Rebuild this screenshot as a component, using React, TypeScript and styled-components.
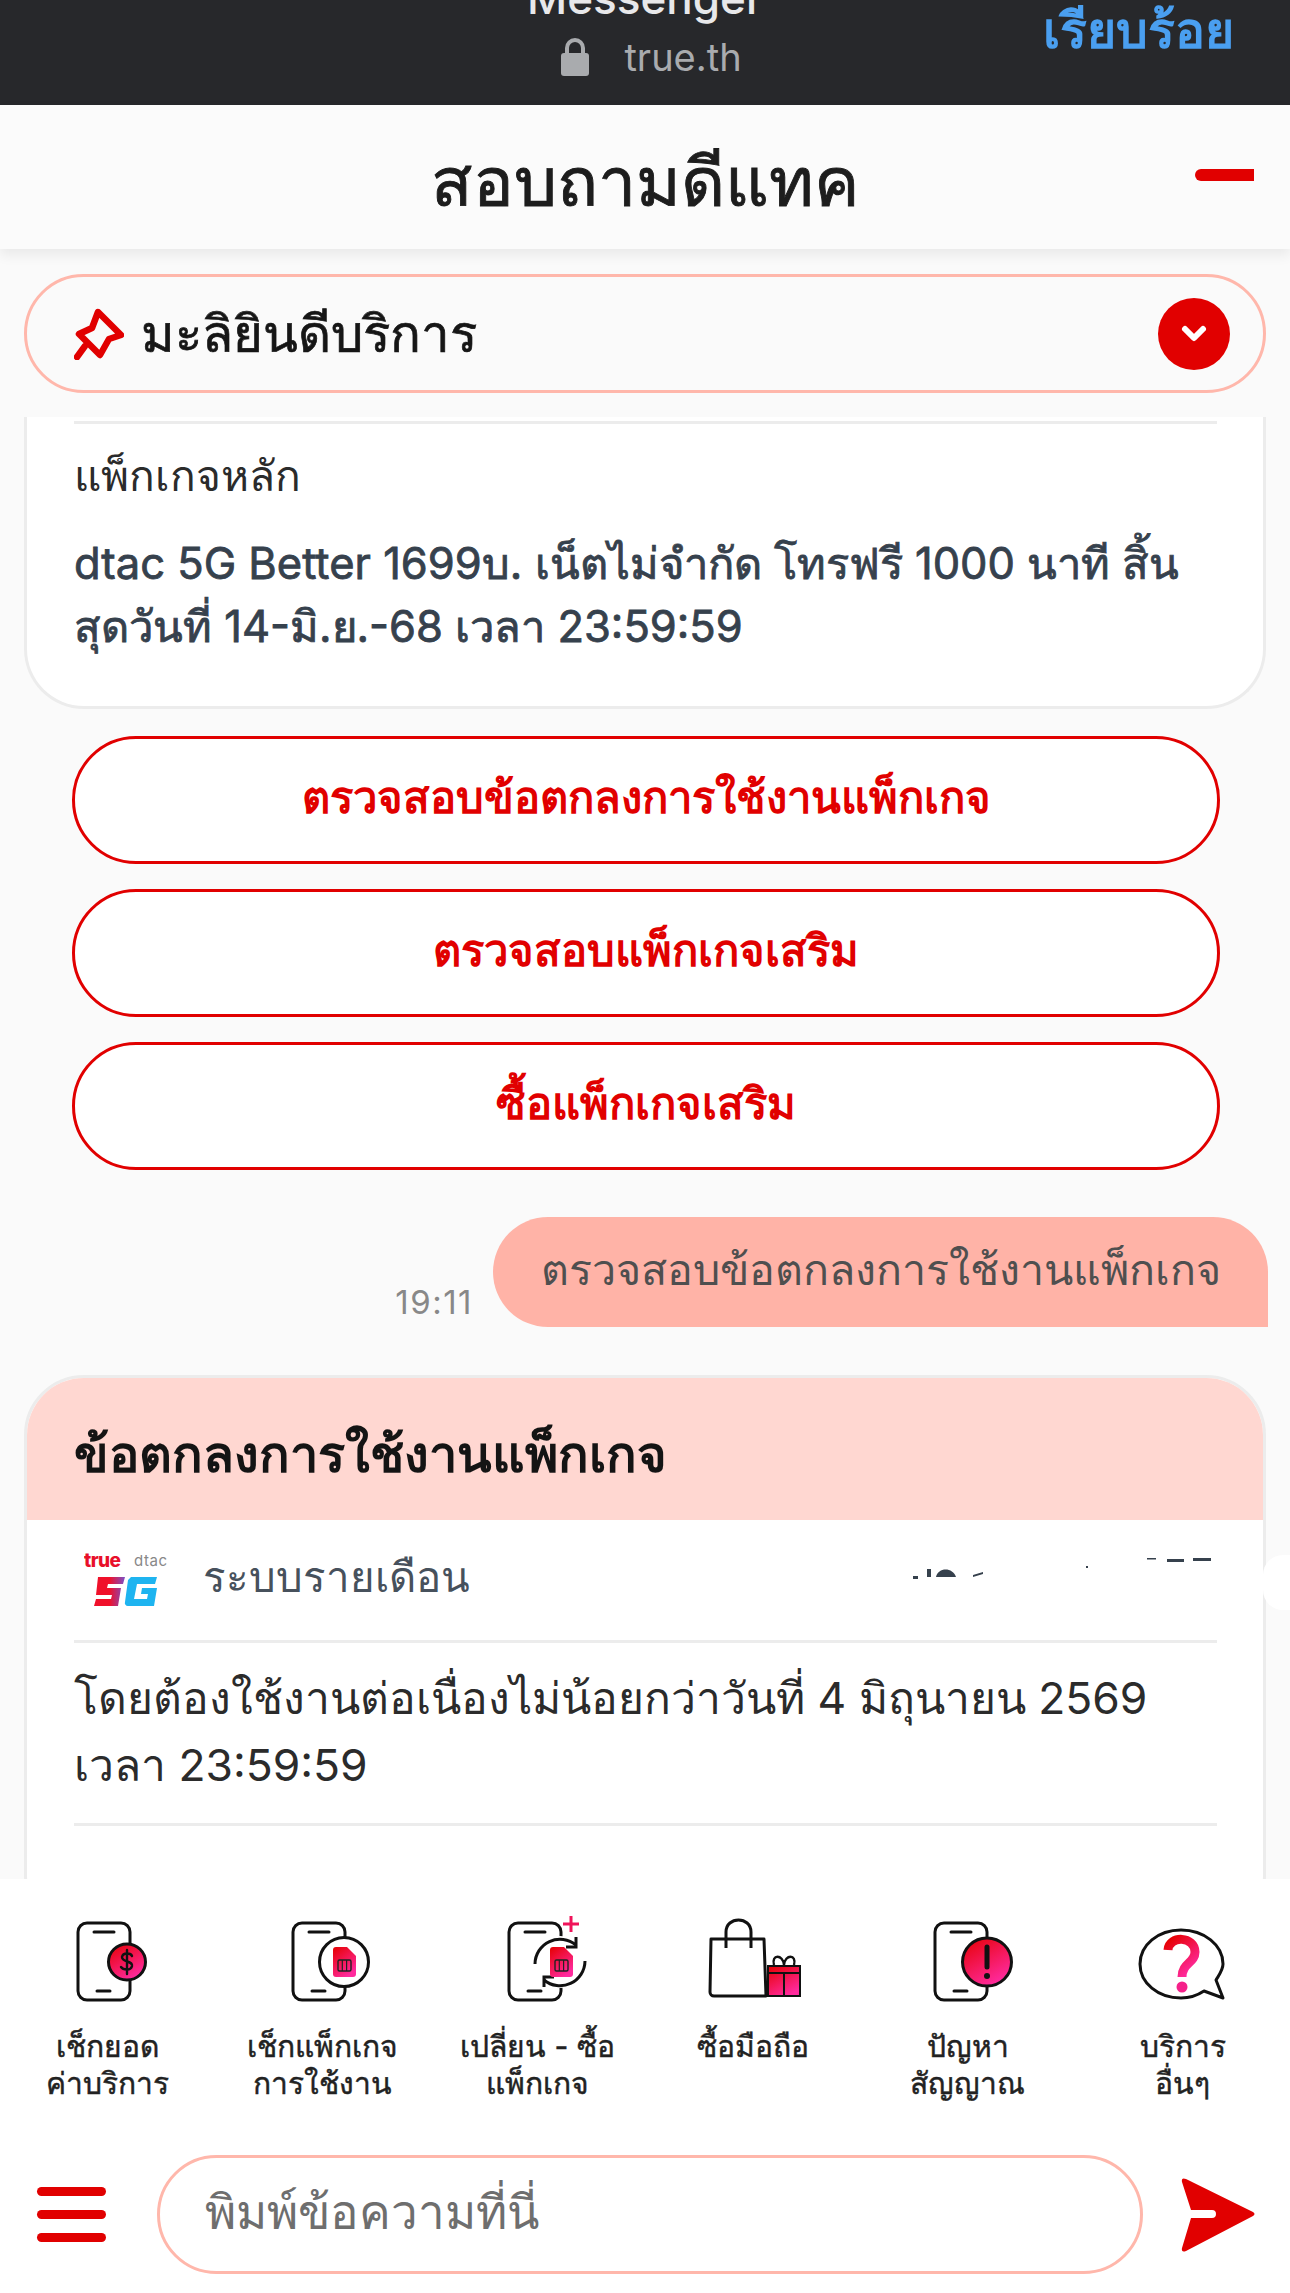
import React from 'react';
import styled, { createGlobalStyle } from 'styled-components';

const RED = '#e10000';

const GlobalStyle = createGlobalStyle`
  html, body {
    margin: 0;
    padding: 0;
    background: #fafafa;
  }
  * {
    box-sizing: border-box;
  }
`;

const Page = styled.div`
  width: 1290px;
  height: 2293px;
  overflow: hidden;
  position: relative;
  display: flex;
  flex-direction: column;
  background: #fafafa;
  font-family: Inter, 'Noto Sans', 'Liberation Sans', sans-serif;
`;

const BrowserBar = styled.div`
  height: 105px;
  flex: none;
  background: #27282b;
  position: relative;
  overflow: hidden;
  display: flex;
  flex-direction: column;
  align-items: center;
`;

const BrowserTitle = styled.div`
  margin-top: -27px;
  height: 50px;
  line-height: 50px;
  font-size: 44px;
  font-weight: 500;
  color: #e8e8ea;
`;

const BrowserUrl = styled.div`
  display: flex;
  align-items: center;
  gap: 34px;
  margin: 13px 0 0 12px;
  font-size: 38px;
  line-height: 42px;
  color: #a9abae;
`;

const DoneLink = styled.div`
  position: absolute;
  right: 56px;
  top: -2px;
  font-size: 50px;
  font-weight: 700;
  line-height: 64px;
  color: #4a9ff0;
`;

const TitleBar = styled.header`
  height: 144px;
  flex: none;
  background: #fbfbfb;
  box-shadow: 0 6px 12px rgba(0, 0, 0, 0.07);
  display: flex;
  align-items: center;
  justify-content: center;
  padding-top: 9px;
  position: relative;
  z-index: 2;
`;

const TitleText = styled.h1`
  margin: 0;
  font-size: 68px;
  font-weight: 400;
  -webkit-text-stroke: 0.9px #1d1d1d;
  color: #1d1d1d;
`;

const MinusMark = styled.span`
  position: absolute;
  left: 1195px;
  top: 64px;
  width: 59px;
  height: 12px;
  background: ${RED};
  border-radius: 6px 0 0 6px;
`;

const PinArea = styled.div`
  flex: none;
  padding: 25px 24px 24px;
`;

const PinPill = styled.div`
  height: 119px;
  border: 3px solid #ffb7ab;
  border-radius: 60px;
  display: flex;
  align-items: center;
  padding: 0 33px 0 47px;
  gap: 17px;
  font-size: 51px;
  -webkit-text-stroke: 0.7px #161616;
  color: #161616;
`;

const PinLabel = styled.span`
  flex: 1;
`;

const ChevronDot = styled.span`
  width: 72px;
  height: 72px;
  border-radius: 50%;
  background: ${RED};
  display: flex;
  align-items: center;
  justify-content: center;
`;

const Chat = styled.main`
  flex: 1;
  min-height: 0;
  overflow: hidden;
  padding: 0 24px;
  display: flex;
  flex-direction: column;
`;

const PackageCard = styled.section`
  height: 292px;
  flex: none;
  background: #fff;
  border: 3px solid #ececec;
  border-top: 0;
  border-radius: 0 0 60px 60px;
  padding: 4px 46px 0 47px;
`;

const Divider = styled.div`
  height: 3px;
  background: #ececec;
`;

const PlainLine = styled.p`
  margin: 21px 0 0;
  font-size: 42.5px;
  line-height: 62px;
  color: #2b2b2b;
`;

const PackageText = styled.p`
  margin: 25px 0 0;
  font-size: 43.5px;
  -webkit-text-stroke: 0.8px #36414d;
  line-height: 63px;
  white-space: nowrap;
  color: #36414d;
`;

const ActionList = styled.div`
  flex: none;
  margin: 27px 46px 0 48px;
  display: flex;
  flex-direction: column;
  gap: 25px;
`;

const ActionButton = styled.div`
  height: 128px;
  border: 3px solid ${RED};
  border-radius: 64px;
  background: #fff;
  display: flex;
  align-items: center;
  justify-content: center;
  padding-bottom: 6px;
  font-size: 43.6px;
  font-weight: 700;
  color: ${RED};
`;

const OutgoingRow = styled.div`
  flex: none;
  margin-top: 47px;
  margin-right: -2px;
  display: flex;
  justify-content: flex-end;
  align-items: flex-end;
  gap: 20px;
`;

const TimeStamp = styled.span`
  font-size: 33px;
  letter-spacing: 1.5px;
  line-height: 36px;
  margin-bottom: 7px;
  color: #888;
`;

const Bubble = styled.div`
  width: 775px;
  height: 110px;
  background: #ffb3a7;
  border-radius: 55px 55px 0 55px;
  display: flex;
  align-items: center;
  justify-content: center;
  padding-bottom: 4px;
  font-size: 43px;
  color: #4f4f4f;
`;

const TermsCard = styled.section`
  flex: none;
  margin-top: 48px;
  height: 560px;
  background: #fff;
  border: 3px solid #ececec;
  border-radius: 60px;
  overflow: hidden;
`;

const TermsHeader = styled.div`
  height: 142px;
  background: #ffd7d1;
  padding: 10px 47px 0;
  display: flex;
  align-items: center;
  font-size: 50.6px;
  font-weight: 600;
  color: #141414;
`;

const TermsBody = styled.div`
  padding: 0 46px 0 47px;
`;

const PlanRow = styled.div`
  height: 120px;
  display: flex;
  align-items: center;
  gap: 34px;
  padding: 0 2px 0 10px;
  font-size: 42px;
  color: #47515c;
`;

const PlanName = styled.span`
  flex: 1;
  margin-bottom: 6px;
`;

const TermsText = styled.p`
  margin: 22px 0 24px;
  font-size: 44.4px;
  line-height: 67px;
  white-space: nowrap;
  color: #2b2b2b;
`;

const MaskTab = styled.div`
  position: absolute;
  right: 0;
  top: 1555px;
  width: 27px;
  height: 55px;
  background: #fff;
  border-radius: 20px 0 0 20px;
`;

const Footer = styled.footer`
  height: 414px;
  flex: none;
  background: #fff;
  display: flex;
  flex-direction: column;
`;

const MenuGrid = styled.nav`
  display: grid;
  grid-template-columns: repeat(6, 215px);
  height: 276px;
`;

const MenuItem = styled.div`
  padding-top: 35px;
  display: flex;
  flex-direction: column;
  align-items: center;
`;

const MenuLabel = styled.div`
  margin-top: 24px;
  font-size: 30px;
  -webkit-text-stroke: 0.45px #222;
  line-height: 37px;
  text-align: center;
  color: #222;
`;

const InputRow = styled.div`
  display: flex;
  align-items: center;
  padding-left: 37px;
`;

const Burger = styled.div`
  width: 69px;
  display: flex;
  flex-direction: column;
  gap: 14px;
`;

const BurgerBar = styled.span`
  height: 9px;
  border-radius: 5px;
  background: ${RED};
`;

const MessageInput = styled.div`
  width: 986px;
  height: 119px;
  margin-left: 51px;
  border: 3px solid #ffb7ab;
  border-radius: 60px;
  display: flex;
  align-items: center;
  padding: 0 0 6px 45px;
  font-size: 47.5px;
  color: #6e6e6e;
`;

const SendButton = styled.span`
  margin-left: 38px;
  display: flex;
`;

const Defs = () => (
  <svg width="0" height="0" style={{ position: 'absolute' }}>
    <defs>
      <linearGradient id="hot" x1="0" y1="0" x2="0.6" y2="1">
        <stop offset="0" stopColor="#e60000" />
        <stop offset="1" stopColor="#ff2a9d" />
      </linearGradient>
      <linearGradient id="five-g" x1="0" y1="0" x2="1" y2="0">
        <stop offset="0.5" stopColor="#f0102a" />
        <stop offset="1" stopColor="#7a50c8" />
      </linearGradient>
    </defs>
  </svg>
);

const Phone = ({ x = 20 }: { x?: number }) => (
  <g fill="none" stroke="#111" strokeWidth="3" strokeLinecap="round">
    <rect x={x} y="9" width="52" height="77" rx="9" />
    <path d={`M${x + 16} 18h20M${x + 19} 77h13`} strokeWidth="3" />
  </g>
);

const Sim = ({ x }: { x: number }) => (
  <g>
    <path
      d={`M${x} 36a3 3 0 0 1 3-3h11l9 9v18a3 3 0 0 1-3 3h-17a3 3 0 0 1-3-3z`}
      fill="url(#hot)"
    />
    <rect x={x + 5} y="46" width="13" height="11" rx="1.5" fill="none" stroke="#222" strokeWidth="1.4" />
    <path d={`M${x + 9.3} 46v11M${x + 13.6} 46v11`} stroke="#222" strokeWidth="1.2" />
  </g>
);

const BillIcon = () => (
  <svg width="100" height="90" viewBox="0 0 100 90">
    <Phone />
    <ellipse cx="69" cy="48" rx="18.5" ry="18" fill="url(#hot)" stroke="#111" strokeWidth="3" />
    <path
      d="M74 42c-1-3-9-4-10 1 0 6 11 3 10 9-1 5-9 4-11 1M69 36v24"
      fill="none"
      stroke="#111"
      strokeWidth="2.4"
      strokeLinecap="round"
    />
  </svg>
);

const PackageIcon = () => (
  <svg width="100" height="90" viewBox="0 0 100 90">
    <Phone />
    <circle cx="71" cy="48" r="24.5" fill="#fff" stroke="#111" strokeWidth="3" />
    <Sim x={60} />
  </svg>
);

const SwapIcon = () => (
  <svg width="100" height="90" viewBox="0 0 100 90">
    <Phone x={21} />
    <circle cx="72" cy="48" r="26" fill="#fff" />
    <path
      d="M47 50a25 25 0 0 1 41-19M97 47a25 25 0 0 1-41 19"
      fill="none"
      stroke="#111"
      strokeWidth="3"
    />
    <path d="M88 23v10h-10M56 73v-10h10" fill="none" stroke="#111" strokeWidth="3" />
    <path d="M83 2v16M75 10h16" stroke="#f0145a" strokeWidth="3" />
    <Sim x={62} />
  </svg>
);

const ShopIcon = () => (
  <svg width="100" height="90" viewBox="0 0 100 90">
    <path
      d="M8 25h53l2 57H11a4 4 0 0 1-4-4z"
      fill="#fff"
      stroke="#111"
      strokeWidth="3"
      strokeLinejoin="round"
    />
    <path d="M23 34V18c0-16 25-16 25 0v16" fill="none" stroke="#111" strokeWidth="3" />
    <rect x="65" y="52" width="32" height="30" fill="url(#hot)" stroke="#111" strokeWidth="2" />
    <path d="M65 59h32M81 59v23" stroke="#111" strokeWidth="2" />
    <path
      d="M71 51c-3-11 9-11 10 0 1-11 13-11 10 0"
      fill="none"
      stroke="#111"
      strokeWidth="2.4"
    />
  </svg>
);

const SignalIcon = () => (
  <svg width="100" height="90" viewBox="0 0 100 90">
    <Phone x={17} />
    <ellipse cx="69" cy="48" rx="24.5" ry="24" fill="url(#hot)" stroke="#111" strokeWidth="3" />
    <path d="M69 33v20" stroke="#111" strokeWidth="5" strokeLinecap="round" />
    <circle cx="69" cy="62" r="3" fill="#111" />
  </svg>
);

const HelpIcon = () => (
  <svg width="100" height="90" viewBox="0 0 100 90">
    <path
      d="M48 16c-23 0-41 15-41 34s18 34 41 34c9 0 17-3 23-7l19 7-7-18c3-5 7-10 7-16 0-19-19-34-42-34z"
      fill="#fff"
      stroke="#111"
      strokeWidth="3"
      strokeLinejoin="round"
    />
    <path
      d="M35 36c1-15 27-14 27 2 0 11-13 11-13 25"
      fill="none"
      stroke="url(#hot)"
      strokeWidth="9"
    />
    <circle cx="49" cy="73" r="5.5" fill="#f5218a" />
  </svg>
);

const menuItems = [
  { icon: <BillIcon />, lines: ['เช็กยอด', 'ค่าบริการ'] },
  { icon: <PackageIcon />, lines: ['เช็กแพ็กเกจ', 'การใช้งาน'] },
  { icon: <SwapIcon />, lines: ['เปลี่ยน - ซื้อ', 'แพ็กเกจ'] },
  { icon: <ShopIcon />, lines: ['ซื้อมือถือ'] },
  { icon: <SignalIcon />, lines: ['ปัญหา', 'สัญญาณ'] },
  { icon: <HelpIcon />, lines: ['บริการ', 'อื่นๆ'] },
];

const actions = ['ตรวจสอบข้อตกลงการใช้งานแพ็กเกจ', 'ตรวจสอบแพ็กเกจเสริม', 'ซื้อแพ็กเกจเสริม'];

const App = () => (
  <Page>
    <GlobalStyle />
    <Defs />
    <BrowserBar>
      <BrowserTitle>Messenger</BrowserTitle>
      <BrowserUrl>
        <svg width="30" height="38" viewBox="0 0 30 38">
          <path d="M7 17V10a8 8 0 0 1 16 0v7" fill="none" stroke="#a9abae" strokeWidth="4" />
          <rect x="1" y="15" width="28" height="23" rx="3" fill="#a9abae" />
        </svg>
        true.th
      </BrowserUrl>
      <DoneLink>เรียบร้อย</DoneLink>
    </BrowserBar>

    <TitleBar>
      <TitleText>สอบถามดีแทค</TitleText>
      <MinusMark />
    </TitleBar>

    <PinArea>
      <PinPill>
        <svg width="50" height="52" viewBox="0 0 50 52">
          <path
            d="M24 4l23 23-12 4-9 16L5 26l13-6z M11 38L3 49"
            fill="none"
            stroke={RED}
            strokeWidth="6.5"
            strokeLinejoin="round"
            strokeLinecap="round"
          />
        </svg>
        <PinLabel>มะลิยินดีบริการ</PinLabel>
        <ChevronDot>
          <svg width="30" height="22" viewBox="0 0 30 22">
            <path d="M6 6l9 9 9-9" fill="none" stroke="#fff" strokeWidth="6" strokeLinecap="round" strokeLinejoin="round" />
          </svg>
        </ChevronDot>
      </PinPill>
    </PinArea>

    <Chat>
      <PackageCard>
        <Divider />
        <PlainLine>แพ็กเกจหลัก</PlainLine>
        <PackageText>
          dtac 5G Better 1699บ. เน็ตไม่จำกัด โทรฟรี 1000 นาที สิ้น
          <br />
          สุดวันที่ 14-มิ.ย.-68 เวลา 23:59:59
        </PackageText>
      </PackageCard>

      <ActionList>
        {actions.map((label) => (
          <ActionButton key={label}>{label}</ActionButton>
        ))}
      </ActionList>

      <OutgoingRow>
        <TimeStamp>19:11</TimeStamp>
        <Bubble>ตรวจสอบข้อตกลงการใช้งานแพ็กเกจ</Bubble>
      </OutgoingRow>

      <TermsCard>
        <TermsHeader>ข้อตกลงการใช้งานแพ็กเกจ</TermsHeader>
        <TermsBody>
          <PlanRow>
            <svg width="85" height="60" viewBox="0 0 85 60">
              <text x="0" y="17" fontFamily="Inter, sans-serif" fontSize="19" fontWeight="800" fill="#e8102a" textLength="37">true</text>
              <text x="50" y="16" fontFamily="Inter, sans-serif" fontSize="15" fill="#888" textLength="33">dtac</text>
              <path d="M14 27h27l-2 7H24l-1 4h14l-3 18H10l2-7h15l1-4H12z" fill="url(#five-g)" />
              <path d="M47 27h26l-2 7H53l-3 15h13l1-5h-7l1-6h15l-3 18H44a3 3 0 0 1-3-4l3-22z" fill="#1eb4f0" />
            </svg>
            <PlanName>ระบบรายเดือน</PlanName>
            <svg width="305" height="60" viewBox="0 0 305 60">
              <path d="M3 26h5v3H3zM17 19h4v8h-4zM26 27c2-10 17-10 20 0zM63 25l10-3v2l-10 3zM176 16h2v2h-2zM237 8h9v1.5h-9zM257 9h17v3h-17zM283 8h18v3h-18z" fill="#36414d" />
            </svg>
          </PlanRow>
          <Divider />
          <TermsText>
            โดยต้องใช้งานต่อเนื่องไม่น้อยกว่าวันที่ 4 มิถุนายน 2569
            <br />
            เวลา 23:59:59
          </TermsText>
          <Divider />
        </TermsBody>
      </TermsCard>
    </Chat>
    <MaskTab />

    <Footer>
      <MenuGrid>
        {menuItems.map((item) => (
          <MenuItem key={item.lines[0]}>
            {item.icon}
            <MenuLabel>
              {item.lines.map((line) => (
                <div key={line}>{line}</div>
              ))}
            </MenuLabel>
          </MenuItem>
        ))}
      </MenuGrid>
      <InputRow>
        <Burger>
          <BurgerBar />
          <BurgerBar />
          <BurgerBar />
        </Burger>
        <MessageInput>พิมพ์ข้อความที่นี่</MessageInput>
        <SendButton>
          <svg width="74" height="74" viewBox="0 0 74 74">
            <path
              d="M5 1l67 33q3 2 0 4L5 73q-5 2-4-3l9-30h21a4 4 0 0 0 0-8H10L1 4q-1-5 4-3z"
              fill={RED}
            />
          </svg>
        </SendButton>
      </InputRow>
    </Footer>
  </Page>
);

export default App;
